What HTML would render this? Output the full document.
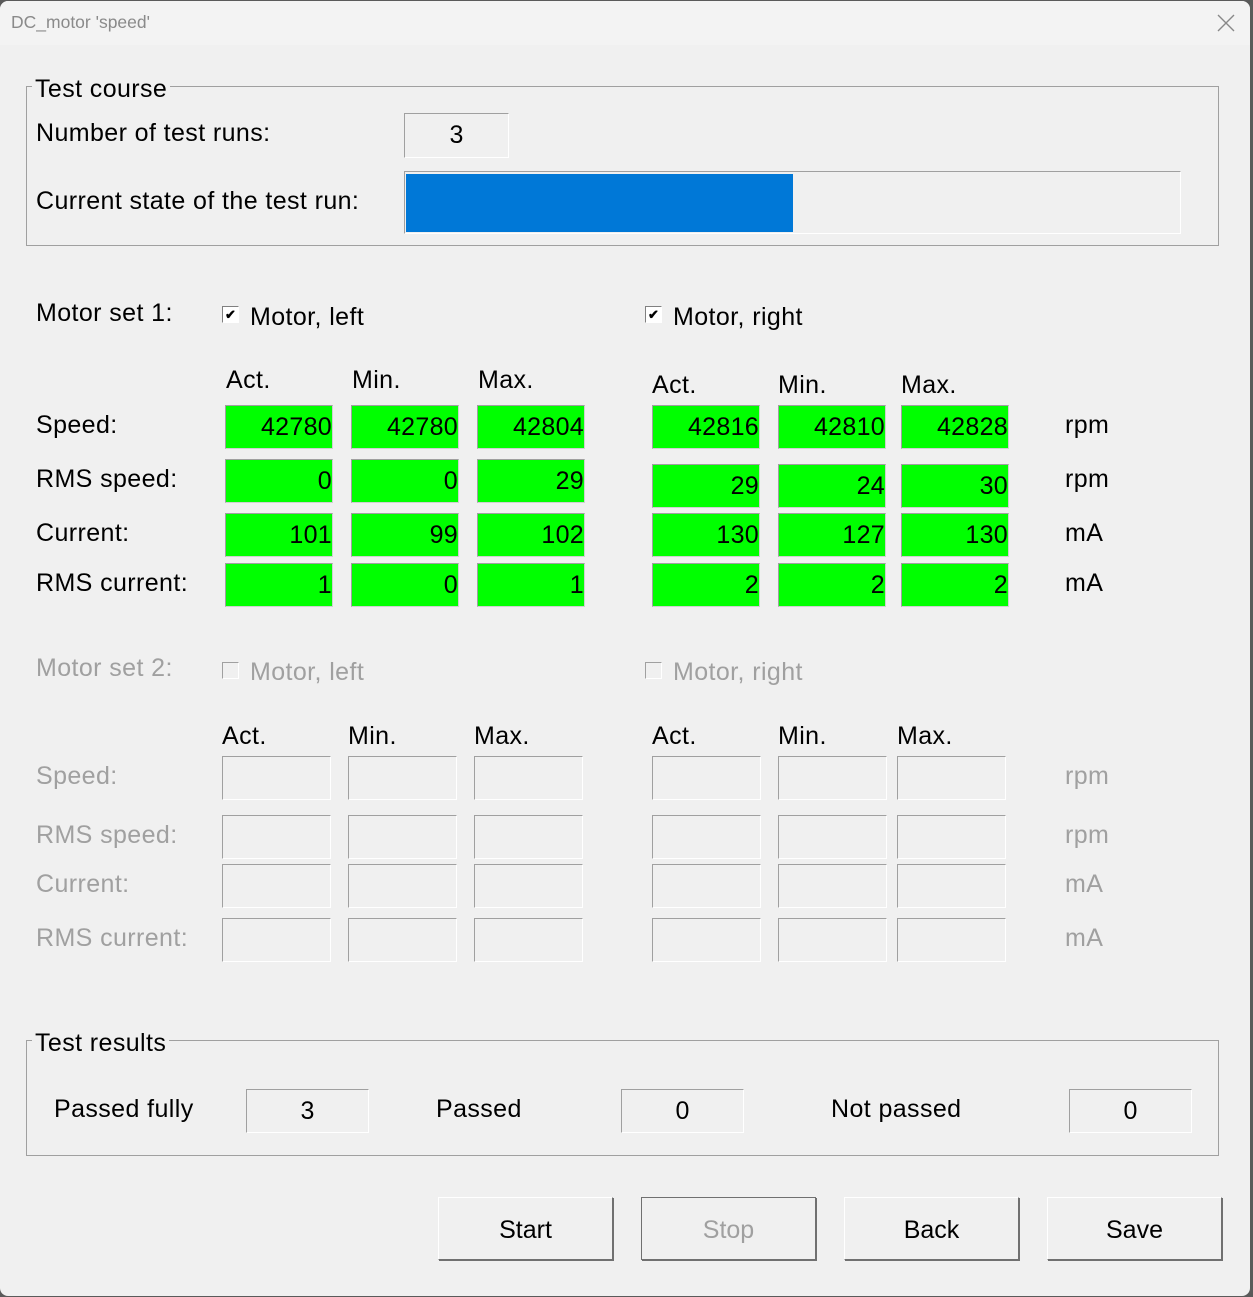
<!DOCTYPE html>
<html><head><meta charset="utf-8"><style>
*{margin:0;padding:0;box-sizing:border-box}
body{width:1253px;height:1297px;background:#5a5a5a;font-family:"Liberation Sans",sans-serif;position:relative;overflow:hidden}
#win{position:absolute;left:0;top:1px;width:1250px;height:1295px;background:#f0f0f0;border-radius:8px;overflow:hidden}
#tb{position:absolute;left:0;top:0;width:100%;height:44px;background:#f3f3f3}
.t{position:absolute;font-size:25px;letter-spacing:0.4px;line-height:26px;color:#000;white-space:nowrap;margin-top:-1px}
.g{color:#a0a0a0}
.grp{position:absolute;border:1px solid #a0a0a0}
.box{position:absolute;border:1px solid;border-color:#a0a0a0 #fff #fff #a0a0a0;font-size:25px;text-align:center;line-height:42px}
.gr{position:absolute;background:#00ff00;border:1px solid;border-color:#a0a0a0 #d0d0d0 #d0d0d0 #a0a0a0;font-size:25px;letter-spacing:0.3px;text-align:right;line-height:42px;padding-right:0;height:44px;width:108px}
.e{position:absolute;border:1px solid;border-color:#a0a0a0 #fff #fff #a0a0a0;height:44px;width:109px}
.cb{position:absolute;width:17px;height:17px;border:1px solid;border-color:#808080 #fff #fff #808080;background:#fff;font-size:13px;line-height:15px;text-align:center;font-weight:bold}
.cbd{background:#f0f0f0;border-color:#a0a0a0 #fff #fff #a0a0a0}
.btn{position:absolute;width:175px;height:63px;border:1px solid;border-color:#fff #707070 #707070 #fff;box-shadow:1px 1px 0 #707070;font-size:25px;text-align:center;line-height:64px;background:#f0f0f0}
</style></head><body>
<div id="win">
<div id="tb"></div>
<div class="t" style="left:11px;top:12px;font-size:17.5px;line-height:20px;color:#8a8a8a;letter-spacing:0">DC_motor 'speed'</div>
<svg style="position:absolute;left:1217px;top:13px" width="18" height="18"><path d="M1 1L17 17M17 1L1 17" stroke="#888" stroke-width="1.4"/></svg>

<div class="grp" style="left:26px;top:85px;width:1193px;height:160px"></div>
<div class="t" style="left:32px;top:76px;background:#f0f0f0;padding:0 3px">Test course</div>
<div class="t" style="left:36px;top:120px">Number of test runs:</div>
<div class="box" style="left:404px;top:112px;width:105px;height:45px">3</div>
<div class="t" style="left:36px;top:188px">Current state of the test run:</div>
<div class="box" style="left:404px;top:170px;width:777px;height:63px"></div>
<div style="position:absolute;left:406px;top:173px;width:387px;height:58px;background:#0078d7"></div>

<div class="t" style="left:36px;top:300px">Motor set 1:</div>
<div class="cb" style="left:222px;top:305px">✔</div>
<div class="t" style="left:250px;top:304px">Motor, left</div>
<div class="cb" style="left:645px;top:305px">✔</div>
<div class="t" style="left:673px;top:304px">Motor, right</div>

<div class="t" style="left:226px;top:367px">Act.</div>
<div class="t" style="left:352px;top:367px">Min.</div>
<div class="t" style="left:478px;top:367px">Max.</div>
<div class="t" style="left:652px;top:372px">Act.</div>
<div class="t" style="left:778px;top:372px">Min.</div>
<div class="t" style="left:901px;top:372px">Max.</div>

<div class="t" style="left:36px;top:412px">Speed:</div>
<div class="t" style="left:36px;top:466px">RMS speed:</div>
<div class="t" style="left:36px;top:520px">Current:</div>
<div class="t" style="left:36px;top:570px">RMS current:</div>
<div class="t" style="left:1065px;top:412px">rpm</div>
<div class="t" style="left:1065px;top:466px">rpm</div>
<div class="t" style="left:1065px;top:520px">mA</div>
<div class="t" style="left:1065px;top:570px">mA</div>

<div class="gr" style="left:225px;top:404px">42780</div>
<div class="gr" style="left:351px;top:404px">42780</div>
<div class="gr" style="left:477px;top:404px">42804</div>
<div class="gr" style="left:652px;top:404px">42816</div>
<div class="gr" style="left:778px;top:404px">42810</div>
<div class="gr" style="left:901px;top:404px">42828</div>

<div class="gr" style="left:225px;top:458px">0</div>
<div class="gr" style="left:351px;top:458px">0</div>
<div class="gr" style="left:477px;top:458px">29</div>
<div class="gr" style="left:652px;top:463px">29</div>
<div class="gr" style="left:778px;top:463px">24</div>
<div class="gr" style="left:901px;top:463px">30</div>

<div class="gr" style="left:225px;top:512px">101</div>
<div class="gr" style="left:351px;top:512px">99</div>
<div class="gr" style="left:477px;top:512px">102</div>
<div class="gr" style="left:652px;top:512px">130</div>
<div class="gr" style="left:778px;top:512px">127</div>
<div class="gr" style="left:901px;top:512px">130</div>

<div class="gr" style="left:225px;top:562px">1</div>
<div class="gr" style="left:351px;top:562px">0</div>
<div class="gr" style="left:477px;top:562px">1</div>
<div class="gr" style="left:652px;top:562px">2</div>
<div class="gr" style="left:778px;top:562px">2</div>
<div class="gr" style="left:901px;top:562px">2</div>

<div class="t g" style="left:36px;top:655px">Motor set 2:</div>
<div class="cb cbd" style="left:222px;top:661px"></div>
<div class="t g" style="left:250px;top:659px">Motor, left</div>
<div class="cb cbd" style="left:645px;top:661px"></div>
<div class="t g" style="left:673px;top:659px">Motor, right</div>

<div class="t" style="left:222px;top:723px">Act.</div>
<div class="t" style="left:348px;top:723px">Min.</div>
<div class="t" style="left:474px;top:723px">Max.</div>
<div class="t" style="left:652px;top:723px">Act.</div>
<div class="t" style="left:778px;top:723px">Min.</div>
<div class="t" style="left:897px;top:723px">Max.</div>

<div class="t g" style="left:36px;top:763px">Speed:</div>
<div class="t g" style="left:36px;top:822px">RMS speed:</div>
<div class="t g" style="left:36px;top:871px">Current:</div>
<div class="t g" style="left:36px;top:925px">RMS current:</div>
<div class="t g" style="left:1065px;top:763px">rpm</div>
<div class="t g" style="left:1065px;top:822px">rpm</div>
<div class="t g" style="left:1065px;top:871px">mA</div>
<div class="t g" style="left:1065px;top:925px">mA</div>

<div class="e" style="left:222px;top:755px"></div><div class="e" style="left:348px;top:755px"></div><div class="e" style="left:474px;top:755px"></div>
<div class="e" style="left:652px;top:755px"></div><div class="e" style="left:778px;top:755px"></div><div class="e" style="left:897px;top:755px"></div>
<div class="e" style="left:222px;top:814px"></div><div class="e" style="left:348px;top:814px"></div><div class="e" style="left:474px;top:814px"></div>
<div class="e" style="left:652px;top:814px"></div><div class="e" style="left:778px;top:814px"></div><div class="e" style="left:897px;top:814px"></div>
<div class="e" style="left:222px;top:863px"></div><div class="e" style="left:348px;top:863px"></div><div class="e" style="left:474px;top:863px"></div>
<div class="e" style="left:652px;top:863px"></div><div class="e" style="left:778px;top:863px"></div><div class="e" style="left:897px;top:863px"></div>
<div class="e" style="left:222px;top:917px"></div><div class="e" style="left:348px;top:917px"></div><div class="e" style="left:474px;top:917px"></div>
<div class="e" style="left:652px;top:917px"></div><div class="e" style="left:778px;top:917px"></div><div class="e" style="left:897px;top:917px"></div>

<div class="grp" style="left:26px;top:1039px;width:1193px;height:116px"></div>
<div class="t" style="left:32px;top:1030px;background:#f0f0f0;padding:0 3px">Test results</div>
<div class="t" style="left:54px;top:1096px">Passed fully</div>
<div class="box" style="left:246px;top:1088px;width:123px;height:44px">3</div>
<div class="t" style="left:436px;top:1096px">Passed</div>
<div class="box" style="left:621px;top:1088px;width:123px;height:44px">0</div>
<div class="t" style="left:831px;top:1096px">Not passed</div>
<div class="box" style="left:1069px;top:1088px;width:123px;height:44px">0</div>

<div class="btn" style="left:438px;top:1196px">Start</div>
<div class="btn" style="left:641px;top:1196px;color:#a0a0a0;border-color:#707070">Stop</div>
<div class="btn" style="left:844px;top:1196px">Back</div>
<div class="btn" style="left:1047px;top:1196px">Save</div>
</div>
</body></html>
